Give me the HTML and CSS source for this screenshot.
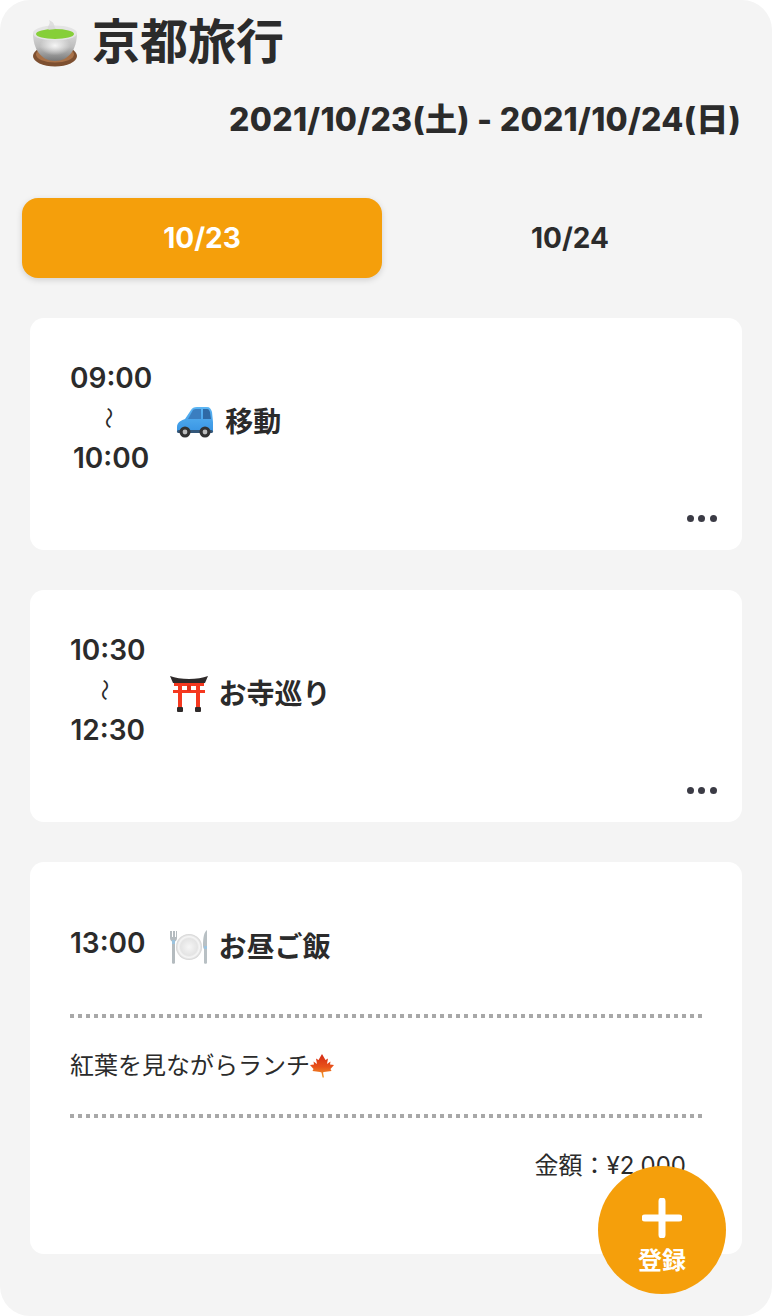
FILE: index.html
```html
<!DOCTYPE html>
<html lang="ja">
<head>
  <meta charset="UTF-8" />
  <title>京都旅行</title>
  <link rel="stylesheet" href="styles.css">
</head>
<body>

<div class="page">
  <header class="trip-header">
    <h1 class="trip-title">
      <svg class="emoji-cup" viewBox="0 0 46 48">
        <defs>
          <linearGradient id="cupGrad" x1="0" y1="0" x2="0" y2="1">
            <stop offset="0" stop-color="#d8d8d8"/>
            <stop offset="0.5" stop-color="#bdbdbd"/>
            <stop offset="1" stop-color="#777"/>
          </linearGradient>
          <radialGradient id="cupShine" cx="0.5" cy="0.45" r="0.35">
            <stop offset="0" stop-color="#fff" stop-opacity="0.85"/>
            <stop offset="1" stop-color="#fff" stop-opacity="0"/>
          </radialGradient>
        </defs>
        <ellipse cx="23" cy="37" rx="22" ry="10.5" fill="#7d4f30"/>
        <ellipse cx="23" cy="35.5" rx="19" ry="8" fill="#a87148"/>
        <path d="M1 14 C1 30 9 42 23 42 C37 42 45 30 45 14 Z" fill="url(#cupGrad)"/>
        <path d="M1 14 C1 30 9 42 23 42 C37 42 45 30 45 14 Z" fill="url(#cupShine)"/>
        <ellipse cx="23" cy="14" rx="22" ry="7.500" fill="#e4e4e4"/>
        <ellipse cx="23" cy="15" rx="19" ry="5" fill="#86cf38"/>
        <path d="M17 11 C13 7 20 6 17 1 C24 4 21 7 24 10 Z" fill="#d6d6d6" opacity="0.7"/>
      </svg>
      <span>京都旅行</span>
    </h1>
    <p class="trip-dates">2021/10/23(土) - 2021/10/24(日)</p>
  </header>

  <nav class="day-tabs">
    <div class="day-tab active">10/23</div>
    <div class="day-tab">10/24</div>
  </nav>

  <main class="plan-list">
    <section class="plan-card">
      <div class="plan-head">
        <div class="plan-time">
          <div>09:00</div>
          <div class="wave">〜</div>
          <div>10:00</div>
        </div>
        <div class="plan-name">
          <svg class="emoji" viewBox="0 0 38 32">
            <defs>
              <linearGradient id="carGrad" x1="0" y1="0" x2="0" y2="1">
                <stop offset="0" stop-color="#5cb6f4"/>
                <stop offset="1" stop-color="#3a96e4"/>
              </linearGradient>
            </defs>
            <path d="M1 21 C1 16 6 14 9 13 L15 4 C16 2 18 1 21 1 L31 1 C34 1 35 3 36 6 L37 16 L37 25 L1 25 Z" fill="url(#carGrad)"/>
            <path d="M12 13 L17 4 C18 3 19 3 21 3 L25 3 L25 13 Z" fill="#3a7ec0"/>
            <path d="M27 3 L31 3 C33 3 33 4 34 6 L35 13 L27 13 Z" fill="#2f6aa6"/>
            <rect x="1" y="24" width="36" height="3" rx="1.500" fill="#33577a"/>
            <circle cx="9" cy="26" r="5.500" fill="#333"/>
            <circle cx="9" cy="26" r="2.400" fill="#bdbdbd"/>
            <circle cx="29" cy="26" r="5.500" fill="#333"/>
            <circle cx="29" cy="26" r="2.400" fill="#bdbdbd"/>
          </svg>
          <span>移動</span>
        </div>
      </div>
      <div class="more"><i></i><i></i><i></i></div>
    </section>

    <section class="plan-card">
      <div class="plan-head">
        <div class="plan-time">
          <div>10:30</div>
          <div class="wave">〜</div>
          <div>12:30</div>
        </div>
        <div class="plan-name">
          <svg class="emoji" viewBox="0 0 38 36">
            <path d="M0 0 C10 4 28 4 38 0 L35 7 C26 8 12 8 3 7 Z" fill="#2f2a2a"/>
            <rect x="4" y="7" width="30" height="3" fill="#f5381f"/>
            <rect x="3" y="14" width="32" height="3" fill="#f5381f"/>
            <rect x="17" y="9" width="4" height="6" fill="#e0301a"/>
            <rect x="8" y="9" width="4" height="22" fill="#f5381f"/>
            <rect x="26" y="9" width="4" height="22" fill="#f5381f"/>
            <rect x="7" y="31" width="6" height="5" rx="1" fill="#2f2a2a"/>
            <rect x="25" y="31" width="6" height="5" rx="1" fill="#2f2a2a"/>
          </svg>
          <span>お寺巡り</span>
        </div>
      </div>
      <div class="more"><i></i><i></i><i></i></div>
    </section>

    <section class="plan-card detail">
      <div class="plan-head">
        <div class="plan-time">
          <div>13:00</div>
        </div>
        <div class="plan-name">
          <svg class="emoji" viewBox="0 0 38 36">
            <defs>
              <radialGradient id="plateGrad" cx="0.5" cy="0.5" r="0.5">
                <stop offset="0" stop-color="#f6f6f6"/>
                <stop offset="0.65" stop-color="#e4e4e4"/>
                <stop offset="0.8" stop-color="#f6f6f6"/>
                <stop offset="1" stop-color="#d2d2d2"/>
              </radialGradient>
            </defs>
            <circle cx="19" cy="18" r="13" fill="url(#plateGrad)"/>
            <path d="M0 2 V9 C0 11 1 12 2 12.500 V34 C2 35 5 35 5 34 V12.500 C6 12 7 11 7 9 V2 H6 V8 H5 V2 H3 V8 H2 V2 Z" fill="#b4bbbf"/>
            <rect x="2" y="11" width="3" height="4" fill="#9cc3de"/>
            <path d="M37 1 C34 3 33 9 33 17 C33 19 34 20 34 20 V34 C34 35 37 35 37 34 Z" fill="#b8c0c4"/>
            <rect x="34" y="17" width="3" height="3" fill="#9cc3de"/>
          </svg>
          <span>お昼ご飯</span>
        </div>
      </div>
      <div class="plan-memo">
        紅葉を見ながらランチ<svg class="emoji-leaf" viewBox="0 0 24 24">
          <defs>
            <linearGradient id="leafGrad" x1="0" y1="0" x2="0" y2="1">
              <stop offset="0" stop-color="#d42a14"/>
              <stop offset="0.55" stop-color="#e8521a"/>
              <stop offset="1" stop-color="#f2a02a"/>
            </linearGradient>
          </defs>
          <path d="M12 0 L15.500 6 L18 4.500 L17 10 L20.500 7.500 L20 10.500 L24 11 L20.500 15 L21.500 17 L14 18 L13 18.500 L14 23.500 L12.500 23.500 L11.500 18.500 L10 18 L2.500 17 L3.500 15 L0 11 L4 10.500 L3.500 7.500 L7 10 L6 4.500 L8.500 6 Z" fill="url(#leafGrad)"/>
        </svg>
      </div>
      <div class="plan-cost">金額：¥2,000</div>
    </section>
  </main>

  <button class="add-btn">
    <svg class="add-icon" viewBox="0 0 40 40">
      <path d="M20 3 V37 M3 20 H37" stroke="#fff" stroke-width="7" stroke-linecap="round"/>
    </svg>
    <span>登録</span>
  </button>
</div>

</body>
</html>
```

FILE: styles.css
```css
* {
  box-sizing: border-box;
}
body {
  margin: 0;
  background-color: #fff;
  font-family: Inter, "Noto Sans CJK JP", sans-serif;
  color: #2b2b2b;
}
.page {
  position: relative;
  height: 1316px;
  background-color: #f4f4f4;
  border-radius: 30px;
  overflow: hidden;
}
.trip-title {
  display: flex;
  align-items: center;
  gap: 14px;
  margin: 0;
  height: 84px;
  padding-left: 32px;
  font-size: 48px;
  font-weight: 700;
  line-height: 1;
}
.emoji-cup {
  width: 46px;
  height: 48px;
  margin-top: 2px;
}
.trip-dates {
  margin: 0;
  padding-right: 31px;
  height: 114px;
  padding-top: 16px;
  text-align: right;
  font-size: 32px;
  line-height: 39px;
  font-weight: 800;
  letter-spacing: 0.3px;
}
.day-tabs {
  display: grid;
  grid-template-columns: 1fr 1fr;
  gap: 8px;
  margin: 0 22px;
}
.day-tab {
  height: 80px;
  border-radius: 16px;
  font-size: 28px;
  font-weight: 700;
  line-height: 80px;
  text-align: center;
}
.day-tab.active {
  background-color: #f59f0b;
  color: #fff;
  box-shadow: 0 2px 6px rgba(0, 0, 0, 0.15);
}
.plan-list {
  display: flex;
  flex-direction: column;
  gap: 40px;
  margin: 40px 30px 0;
}
.plan-card {
  position: relative;
  height: 232px;
  padding: 40px;
  background-color: #fff;
  border-radius: 14px;
}
.plan-card.detail {
  height: 392px;
}
.detail .plan-head {
  margin-top: 17px;
}
.plan-head {
  display: flex;
  align-items: center;
  gap: 24px;
}
.plan-time {
  font-size: 28px;
  font-weight: 600;
  line-height: 40px;
  text-align: center;
}
.wave {
  display: block;
  transform: rotate(90deg) translateY(2.500px);
  font-size: 22px;
  font-weight: 400;
}
.plan-name {
  display: flex;
  align-items: center;
  gap: 11px;
  margin-top: 8px;
  font-size: 28px;
  font-weight: 700;
  line-height: 40px;
}
.emoji {
  width: 38px;
  height: 36px;
}
.more {
  position: absolute;
  right: 25px;
  bottom: 28px;
  display: flex;
  gap: 4.700px;
}
.more i {
  width: 7px;
  height: 7px;
  border-radius: 50%;
  background-color: #3b3b45;
}
.plan-memo {
  margin-top: 47px;
  height: 104px;
  padding-top: 34px;
  background-image:
    repeating-linear-gradient(90deg, #a8a8a8 0 4px, transparent 4px 8.050px),
    repeating-linear-gradient(90deg, #a8a8a8 0 4px, transparent 4px 8.050px);
  background-size: 100% 4px;
  background-position: top, bottom;
  background-repeat: no-repeat;
  font-size: 24px;
  line-height: 36px;
}
.emoji-leaf {
  width: 24px;
  height: 24px;
  vertical-align: -4px;
}
.plan-cost {
  margin-top: 30px;
  padding-right: 16px;
  text-align: right;
  font-size: 24px;
  line-height: 36px;
}
.add-btn {
  position: absolute;
  left: 598px;
  top: 1166px;
  display: flex;
  flex-direction: column;
  align-items: center;
  width: 128px;
  height: 128px;
  padding: 32px 0 0;
  border: none;
  border-radius: 50%;
  background-color: #f59f0b;
  color: #fff;
  font-family: inherit;
  font-size: 24px;
  font-weight: 700;
  line-height: 32px;
}
.add-icon {
  width: 40px;
  height: 40px;
  margin-bottom: 7px;
}
```
